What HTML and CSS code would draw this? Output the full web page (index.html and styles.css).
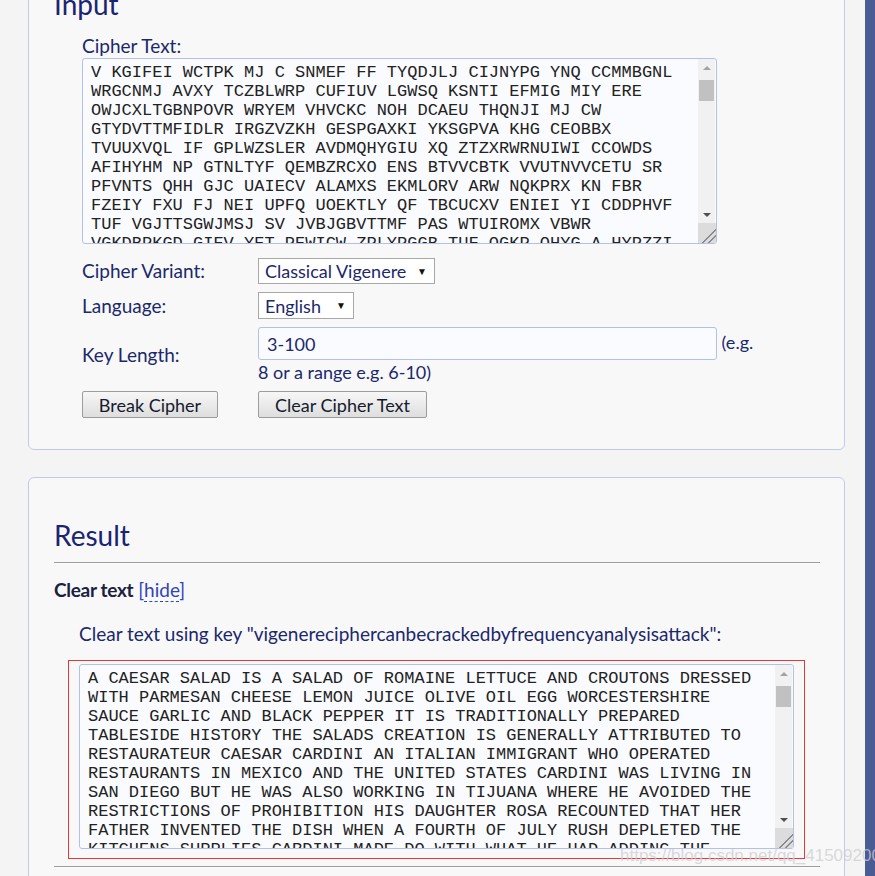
FILE: index.html
```html
<!DOCTYPE html>
<html lang="en">
<head>
    <meta charset="UTF-8">
    <meta name="viewport" content="width=device-width, initial-scale=1.0">
    <title>Vigenere Solver</title>
    <link rel="stylesheet" href="styles.css">
</head>
<body>
    <div class="page">
        <main class="content">
            <section class="card card-input">
                <h2>Input</h2>

                <form class="cipher-form">
                    <label for="cipherText" class="field-label">Cipher Text:</label>
                    <div class="scroll-box cipher-box">
                        <textarea id="cipherText" class="code-box" spellcheck="false">V KGIFEI WCTPK MJ C SNMEF FF TYQDJLJ CIJNYPG YNQ CCMMBGNL
WRGCNMJ AVXY TCZBLWRP CUFIUV LGWSQ KSNTI EFMIG MIY ERE
OWJCXLTGBNPOVR WRYEM VHVCKC NOH DCAEU THQNJI MJ CW
GTYDVTTMFIDLR IRGZVZKH GESPGAXKI YKSGPVA KHG CEOBBX
TVUUXVQL IF GPLWZSLER AVDMQHYGIU XQ ZTZXRWRNUIWI CCOWDS
AFIHYHM NP GTNLTYF QEMBZRCXO ENS BTVVCBTK VVUTNVVCETU SR
PFVNTS QHH GJC UAIECV ALAMXS EKMLORV ARW NQKPRX KN FBR
FZEIY FXU FJ NEI UPFQ UOEKTLY QF TBCUCXV ENIEI YI CDDPHVF
TUF VGJTTSGWJMSJ SV JVBJGBVTTMF PAS WTUIROMX VBWR
VGKDBPKGD GIEV YET PEWICW ZPLYPGGB TUF OGKP OHYG A HYPZZI
QWXRTN MJ FOPL SVKGE UZTQ BNV HKJLXO PPDIM WRE CKYUNF
SDLQ TNVW GJIQ RBYEKAV OXIL FZMC TUGH KPAQ NEDR WYIB
LOPHVX ZAQ RTUEMN CVBK OISD YTWQ MNHFE IARD GKWL</textarea>
                        <div class="fake-bar">
                            <span class="bar-arrow bar-up"></span>
                            <span class="bar-thumb"></span>
                            <span class="bar-space"></span>
                            <span class="bar-arrow bar-down"></span>
                            <span class="bar-grip"></span>
                        </div>
                    </div>

                    <div class="options">
                        <label for="variant" class="field-label">Cipher Variant:</label>
                        <div class="field">
                            <span class="select-wrap">
                                <select id="variant" class="select-variant">
                                    <option>Classical Vigenere</option>
                                    <option>Beaufort Cipher</option>
                                    <option>Variant Beaufort</option>
                                </select>
                            </span>
                        </div>

                        <label for="language" class="field-label">Language:</label>
                        <div class="field">
                            <span class="select-wrap">
                                <select id="language" class="select-language">
                                    <option>English</option>
                                    <option>German</option>
                                    <option>French</option>
                                </select>
                            </span>
                        </div>

                        <label for="keyLength" class="field-label">Key Length:</label>
                        <div class="field key-field">
                            <input type="text" id="keyLength" class="key-input" value="3-100"> (e.g.<br>8 or a range e.g. 6-10)
                        </div>

                        <div class="field">
                            <button type="button" class="btn btn-break">Break Cipher</button>
                        </div>
                        <div class="field">
                            <button type="button" class="btn btn-clear" id="clearBtn">Clear Cipher Text</button>
                        </div>
                    </div>
                </form>
            </section>

            <section class="card card-result">
                <h2>Result</h2>
                <hr class="rule">

                <div class="result-title">
                    <strong>Clear text</strong> <a href="#" class="toggle-link">[<span>hide</span>]</a>
                </div>

                <p class="result-caption">Clear text using key "vigenereciphercanbecrackedbyfrequencyanalysisattack":</p>

                <div class="highlight-box">
                    <div class="scroll-box result-wrap">
                        <textarea class="code-box result-box" spellcheck="false" readonly>A CAESAR SALAD IS A SALAD OF ROMAINE LETTUCE AND CROUTONS DRESSED
WITH PARMESAN CHEESE LEMON JUICE OLIVE OIL EGG WORCESTERSHIRE
SAUCE GARLIC AND BLACK PEPPER IT IS TRADITIONALLY PREPARED
TABLESIDE HISTORY THE SALADS CREATION IS GENERALLY ATTRIBUTED TO
RESTAURATEUR CAESAR CARDINI AN ITALIAN IMMIGRANT WHO OPERATED
RESTAURANTS IN MEXICO AND THE UNITED STATES CARDINI WAS LIVING IN
SAN DIEGO BUT HE WAS ALSO WORKING IN TIJUANA WHERE HE AVOIDED THE
RESTRICTIONS OF PROHIBITION HIS DAUGHTER ROSA RECOUNTED THAT HER
FATHER INVENTED THE DISH WHEN A FOURTH OF JULY RUSH DEPLETED THE
KITCHENS SUPPLIES CARDINI MADE DO WITH WHAT HE HAD ADDING THE
DRAMATIC FLAIR OF THE TABLESIDE TOSSING BY THE CHEF A NUMBER OF
HIS STAFF HAVE CLAIMED TO HAVE INVENTED THE SALAD</textarea>
                        <div class="fake-bar">
                            <span class="bar-arrow bar-up"></span>
                            <span class="bar-thumb"></span>
                            <span class="bar-space"></span>
                            <span class="bar-arrow bar-down"></span>
                            <span class="bar-grip"></span>
                        </div>
                    </div>
                </div>

                <hr class="rule">
            </section>
        </main>
        <div class="sidebar"></div>
    </div>

    <div class="watermark">https://blog.csdn.net/qq_41509200</div>

    <script>
        document.getElementById('clearBtn').addEventListener('click', function() {
            document.getElementById('cipherText').value = '';
        });
    </script>
</body>
</html>
```

FILE: styles.css
```css
:root {
    --text-color: #1b286c;
    --link-color: #2f44b8;
    --card-border: #c0caee;
    --field-border: #b3c1ea;
    --field-bg: #fafbff;
    --page-bg: #f4f4f5;
    --card-bg: #f8f8f9;
    --side-color: #4b5b94;
    --bar-track: #f1f1f1;
}

body {
    margin: 0;
    padding: 0;
    font-family: Lato, 'Open Sans', sans-serif;
    font-size: 19px;
    background-color: var(--page-bg);
    color: var(--text-color);
    overflow: hidden;
}

.page {
    display: flex;
    min-height: 100vh;
}

.content {
    width: 865px;
    box-sizing: border-box;
    padding: 0 20px 0 28px;
}

.sidebar {
    flex: 0 0 10px;
    background: var(--side-color);
}

.card {
    background: var(--card-bg);
    border: 1px solid var(--card-border);
    border-radius: 6px;
    padding: 0 24px 31px 25px;
}

.card-input {
    margin-top: -54px;
}

.card-result {
    margin-top: 27px;
}

.card h2 {
    margin: 0;
    padding-top: 40px;
    font-size: 28px;
    line-height: 34px;
    font-weight: 400;
    color: #1a2470;
}

.cipher-form {
    margin: 14px 0 0 28px;
}

.field-label {
    display: block;
    line-height: 22px;
    color: var(--text-color);
}

.scroll-box {
    position: relative;
}

.code-box {
    display: block;
    width: 100%;
    height: 100%;
    box-sizing: border-box;
    padding: 4px 25px 3px 8px;
    font-family: 'Liberation Mono', 'Courier New', monospace;
    font-size: 17px;
    line-height: 19px;
    color: #222;
    background: var(--field-bg);
    border: 1px solid var(--field-border);
    border-radius: 3px;
    white-space: pre-wrap;
    overflow: hidden;
    resize: none;
}

.fake-bar {
    position: absolute;
    top: 1px;
    right: 2px;
    bottom: 1px;
    width: 17px;
    display: flex;
    flex-direction: column;
    background: var(--bar-track);
}

.bar-arrow {
    height: 17px;
    display: flex;
    align-items: center;
    justify-content: center;
}

.bar-arrow::before {
    content: "";
    border-left: 4px solid transparent;
    border-right: 4px solid transparent;
}

.bar-up::before {
    border-bottom: 4px solid #a3a3a3;
}

.bar-down::before {
    border-top: 4px solid #505050;
}

.bar-thumb {
    height: 21px;
    margin: 4px 1px 0;
    background: #c1c1c1;
}

.bar-space {
    flex: 1;
}

.bar-grip {
    height: 20px;
    margin-right: -1px;
    background:
        linear-gradient(135deg, transparent 62%, #8a8a8a 62%, #8a8a8a 67%, transparent 67%, transparent 77%, #8a8a8a 77%, #8a8a8a 82%, transparent 82%),
        #dcdcdc;
}

.cipher-box {
    width: 635px;
    height: 186px;
    margin-top: 1px;
}

.options {
    display: grid;
    grid-template-columns: 176px 1fr;
    row-gap: 8px;
    margin-top: 14px;
}

.options .field-label {
    align-self: center;
}

.select-wrap {
    position: relative;
    display: inline-block;
}

.select-wrap::after {
    content: "\25BC";
    position: absolute;
    right: 8px;
    top: 7px;
    font-size: 10px;
    color: #111;
    pointer-events: none;
}

.select-wrap select {
    -webkit-appearance: none;
    appearance: none;
    height: 26px;
    padding: 0 24px 0 6px;
    font-family: inherit;
    font-size: 18px;
    color: var(--text-color);
    background: #fff;
    border: 1px solid #a8a8a8;
    border-radius: 0;
}

.select-variant {
    width: 177px;
}

.select-language {
    width: 96px;
    height: 27px !important;
}

.key-field {
    font-size: 18px;
    line-height: 22px;
}

.key-input {
    box-sizing: border-box;
    width: 459px;
    height: 33px;
    padding: 0 8px;
    font-family: inherit;
    font-size: 18px;
    color: var(--text-color);
    background: var(--field-bg);
    border: 1px solid var(--field-border);
    border-radius: 3px;
    vertical-align: middle;
    margin-bottom: 1px;
}

.btn {
    height: 27px;
    padding: 0 12px;
    font-family: inherit;
    font-size: 18px;
    color: #161a2e;
    background: linear-gradient(#f7f7f7, #dedede);
    border: 1px solid #9c9c9c;
    border-radius: 2px;
    cursor: pointer;
}

.btn-break {
    width: 136px;
}

.btn-clear {
    width: 169px;
}

.rule {
    margin: 10px 0 0;
    border: 0;
    border-top: 1px solid #9d9d9d;
    border-bottom: 1px solid #fdfdfd;
}

.result-title {
    margin-top: 15px;
    line-height: 22px;
}

.result-title strong {
    color: #1a2040;
    letter-spacing: -0.3px;
}

.toggle-link {
    color: var(--link-color);
    text-decoration: none;
}

.toggle-link span {
    border-bottom: 1px dashed var(--link-color);
}

.result-caption {
    margin: 22px 0 0 25px;
    line-height: 22px;
}

.highlight-box {
    width: 737px;
    box-sizing: border-box;
    margin: 15px 0 0 14px;
    padding: 3px 10px 9px;
    border: 1px solid #e5383b;
}

.result-wrap {
    width: 715px;
    height: 185px;
}

.card-result .highlight-box + .rule {
    margin-top: 7px;
}

.watermark {
    position: absolute;
    left: 620px;
    top: 846px;
    font-family: Arial, 'Liberation Sans', sans-serif;
    font-size: 17px;
    color: rgba(205, 205, 210, 0.75);
    pointer-events: none;
}
```
